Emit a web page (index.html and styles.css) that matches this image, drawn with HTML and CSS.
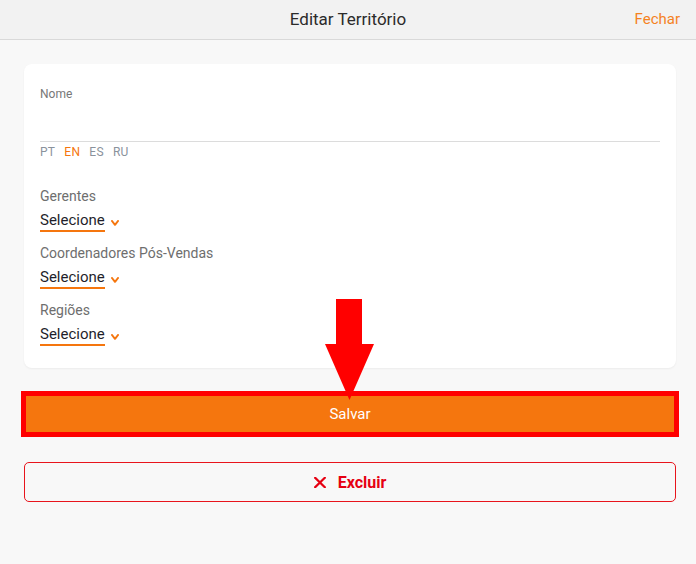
FILE: index.html
```html
<!DOCTYPE html>
<html lang="pt">
<head>
<meta charset="utf-8">
<title>Editar Território</title>
<link rel="stylesheet" href="styles.css">
</head>
<body>
<header class="topbar">
  <span></span>
  <h1 class="title">Editar Território</h1>
  <a class="close" href="#">Fechar</a>
</header>
<main class="content">
  <section class="card">
    <label class="field-label">Nome</label>
    <div class="text-input"></div>
    <div class="langs">
      <span class="lang">PT</span>
      <span class="lang active">EN</span>
      <span class="lang">ES</span>
      <span class="lang">RU</span>
    </div>
    <div class="selects">
      <div class="group">
        <div class="group-label">Gerentes</div>
        <div class="select"><span class="select-value">Selecione</span><svg class="chev" width="8" height="6" viewBox="0 0 8 6"><path d="M1 1 L4 4.8 L7 1" fill="none" stroke="#f5760e" stroke-width="2" stroke-linecap="round" stroke-linejoin="round"/></svg></div>
      </div>
      <div class="group">
        <div class="group-label">Coordenadores Pós-Vendas</div>
        <div class="select"><span class="select-value">Selecione</span><svg class="chev" width="8" height="6" viewBox="0 0 8 6"><path d="M1 1 L4 4.8 L7 1" fill="none" stroke="#f5760e" stroke-width="2" stroke-linecap="round" stroke-linejoin="round"/></svg></div>
      </div>
      <div class="group">
        <div class="group-label">Regiões</div>
        <div class="select"><span class="select-value">Selecione</span><svg class="chev" width="8" height="6" viewBox="0 0 8 6"><path d="M1 1 L4 4.8 L7 1" fill="none" stroke="#f5760e" stroke-width="2" stroke-linecap="round" stroke-linejoin="round"/></svg></div>
      </div>
    </div>
  </section>
  <button class="btn-save">Salvar</button>
  <button class="btn-delete"><svg width="12" height="11" viewBox="0 0 12 11"><path d="M1.2 0.8 L10.8 10.2 M10.8 0.8 L1.2 10.2" stroke="#e60012" stroke-width="2.2" stroke-linecap="square"/></svg><span>Excluir</span></button>
  <svg class="arrow" width="50" height="101" viewBox="0 0 50 101"><polygon points="11,0 37,0 37,45 49,45 24.5,101 0,45 11,45" fill="#ff0000"/></svg>
</main>
</body>
</html>
```
FILE: styles.css
```css
* { box-sizing: border-box; }
html, body { margin: 0; padding: 0; }
body {
  background: #f8f8f8;
  font-family: Roboto, "Liberation Sans", sans-serif;
  width: 696px;
  height: 564px;
  overflow: hidden;
}
.topbar {
  height: 40px;
  background: #f2f2f2;
  border-bottom: 1px solid #d9d9d9;
  display: grid;
  grid-template-columns: 1fr auto 1fr;
  align-items: center;
  padding: 0 16px 2px 16px;
}
.title {
  margin: 0;
  font-size: 17px;
  font-weight: 400;
  color: #2b2b2b;
}
.close {
  justify-self: end;
  color: #f5821f;
  font-size: 15px;
  text-decoration: none;
}
.content {
  position: relative;
  padding: 24px 20px 24px 24px;
  display: flex;
  flex-direction: column;
}
.card {
  background: #fff;
  border-radius: 8px;
  box-shadow: 0 1px 2px rgba(0,0,0,0.05);
  padding: 23px 16px 22px 16px;
  display: flex;
  flex-direction: column;
}
.field-label {
  font-size: 12px;
  line-height: 14px;
  color: #777;
}
.text-input {
  height: 41px;
  border-bottom: 1px solid #dcdcdc;
}
.langs {
  display: flex;
  gap: 9px;
  margin-top: 3px;
  font-size: 12px;
  line-height: 14px;
  color: #8a929c;
  letter-spacing: 0.3px;
}
.lang.active { color: #f5760e; }
.selects {
  margin-top: 29px;
  display: flex;
  flex-direction: column;
  gap: 13px;
}
.group-label {
  font-size: 14px;
  line-height: 17px;
  color: #6e6e6e;
  margin-bottom: 5px;
}
.select {
  display: flex;
  align-items: flex-end;
}
.select-value {
  font-size: 15px;
  line-height: 20px;
  color: #1f1f2b;
  border-bottom: 2px solid #f5760e;
}
.chev {
  margin-left: 6px;
  margin-bottom: 6px;
}
.btn-save {
  margin-top: 26px;
  height: 40px;
  background: #f5760e;
  border: none;
  color: #fff;
  font-family: inherit;
  font-size: 15px;
  font-weight: 400;
  outline: 5px solid #ff0000;
  outline-offset: -2px;
  padding: 0 0 1px 0;
}
.btn-delete {
  margin-top: 28px;
  height: 40px;
  background: transparent;
  border: 1px solid #e8141c;
  border-radius: 5px;
  color: #e60012;
  font-family: inherit;
  font-size: 16px;
  font-weight: 700;
  display: flex;
  align-items: center;
  justify-content: center;
  gap: 12px;
  padding: 0;
}
.arrow {
  position: absolute;
  left: 325px;
  top: 259px;
}
```
